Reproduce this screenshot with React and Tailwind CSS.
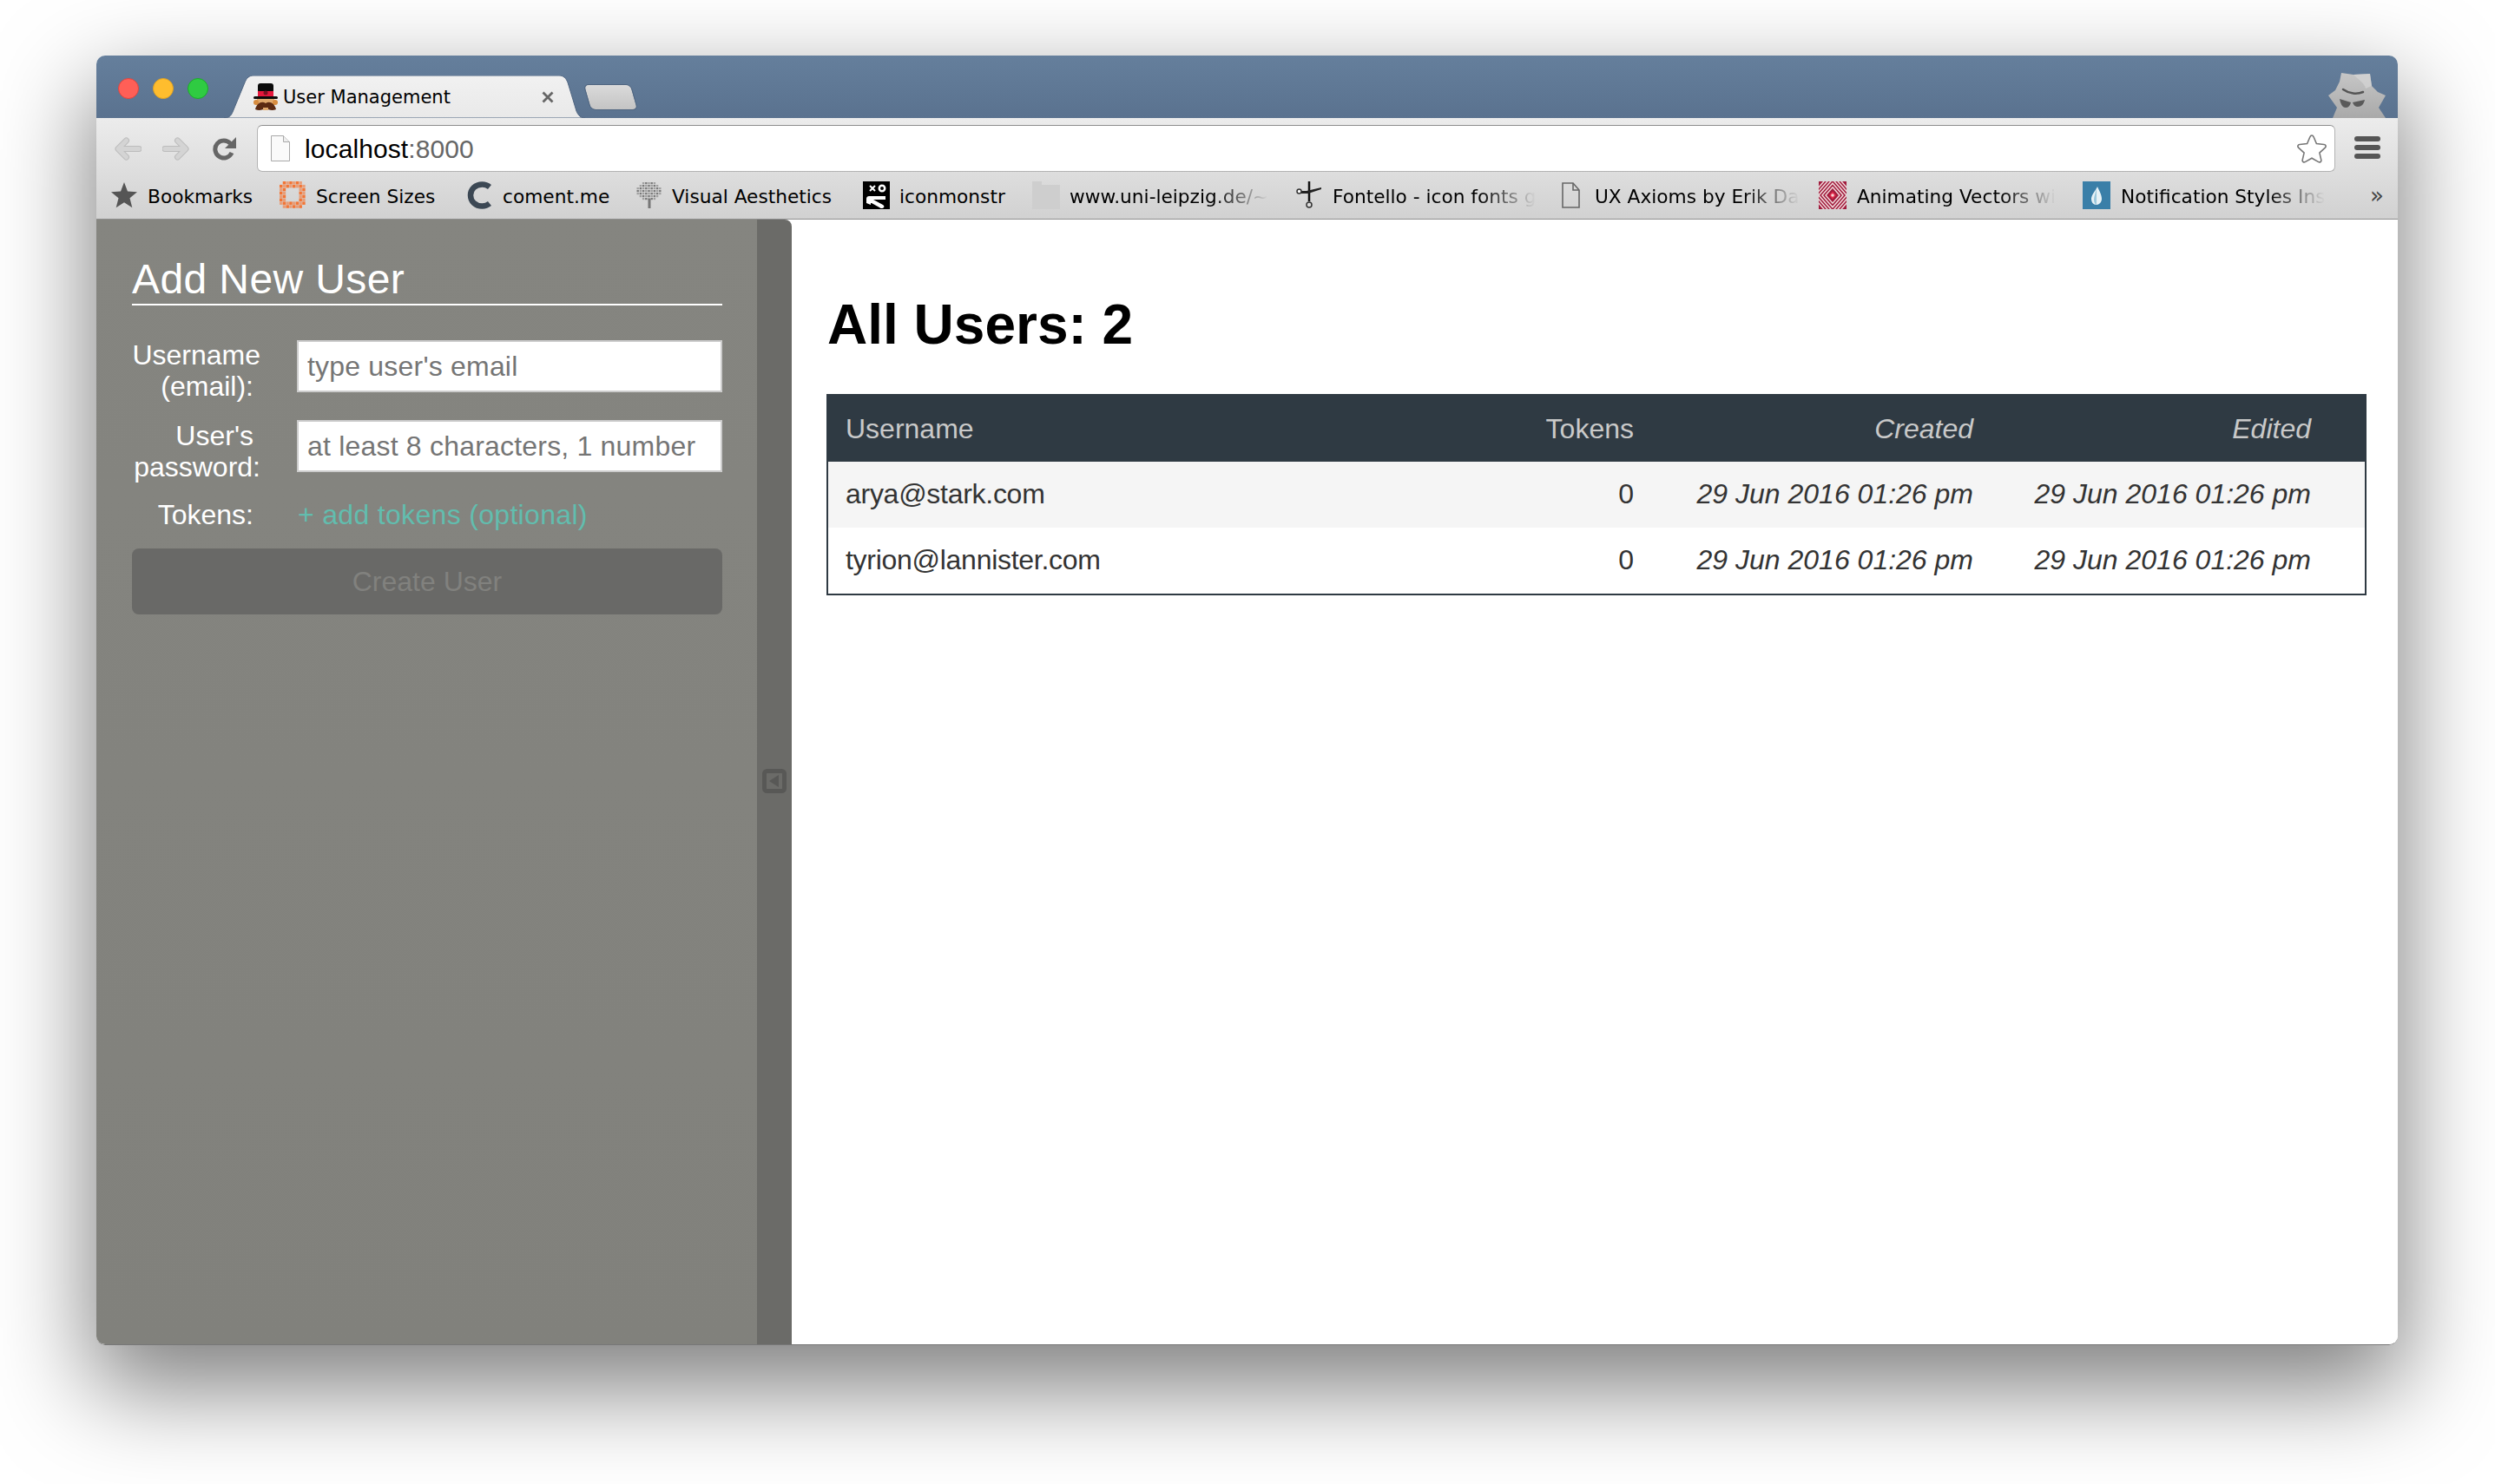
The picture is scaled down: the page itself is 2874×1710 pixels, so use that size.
import React from 'react';

const UI_FONT = "font-['DejaVu_Sans',sans-serif]";

const HatIcon = () => (
  <svg width="28" height="32" viewBox="0 0 28 32">
    <rect x="5" y="0" width="18" height="11" rx="3" fill="#0b0b0b" />
    <rect x="5" y="9" width="18" height="6" fill="#e5173c" />
    <circle cx="14" cy="11" r="2.5" fill="#7b1022" />
    <rect x="0" y="15" width="28" height="3" rx="1.5" fill="#0b0b0b" />
    <rect x="4" y="18" width="20" height="7" fill="#e0a96d" />
    <circle cx="3" cy="22" r="3" fill="#d78c3f" />
    <circle cx="25" cy="22" r="3" fill="#d78c3f" />
    <path d="M14 23C10 20 4 22 2 30c4 2 9 1 12-2 3 3 8 4 12 2-2-8-8-10-12-7z" fill="#5c2a12" />
    <path d="M11 28h6v3h-6z" fill="#e0a96d" />
  </svg>
);

const BackArrow = ({ flip }) => (
  <svg width="31" height="27" viewBox="0 0 31 27" className={flip ? '-scale-x-100' : ''}>
    <path d="M28 13.5H5M13.5 4 4 13.5 13.5 23" fill="none" stroke="#bdbdbd" strokeWidth="7" strokeLinecap="round" strokeLinejoin="round" />
    <path d="M28 13.5H5M13.5 4 4 13.5 13.5 23" fill="none" stroke="#d4d4d4" strokeWidth="5" strokeLinecap="round" strokeLinejoin="round" />
  </svg>
);

const ReloadIcon = () => (
  <svg width="28" height="28" viewBox="0 0 28 28">
    <path d="M20.5 8.5A10 10 0 1 0 22 19" fill="none" stroke="#666" strokeWidth="5" />
    <path d="M27 1v13H14z" fill="#666" />
  </svg>
);

const PageIcon = () => (
  <svg width="22" height="30" viewBox="0 0 22 30">
    <path d="M.5.5h14l7 7v22H.5z" fill="#fafafa" stroke="#a9a9a9" />
    <path d="M14.5.5v7h7" fill="#eee" stroke="#a9a9a9" />
  </svg>
);

const StarOutline = () => (
  <svg width="36" height="34" viewBox="0 0 36 34">
    <path
      d="M18 2c1 0 1.700.8 2.200 2l3.200 7.600 8.700.9c1.900.2 2.700 2.300 1.300 3.600l-6.500 6 1.900 8.300c.4 1.800-1.500 3.100-3.100 2.200L18 28.200l-7.700 4.400c-1.600.9-3.500-.4-3.100-2.200l1.900-8.300-6.500-6C1.200 14.800 2 12.700 3.900 12.500l8.700-.9L15.800 4c.5-1.200 1.200-2 2.200-2z"
      fill="#fff"
      stroke="#777"
      strokeWidth="1.600"
    />
  </svg>
);

const SpyIcon = () => (
  <svg width="66" height="55" viewBox="0 0 66 55">
    <defs>
      <linearGradient id="spy" x1="0" y1="0" x2="0" y2="1">
        <stop offset="0" stopColor="#c6c6c6" />
        <stop offset="1" stopColor="#a9a9a9" />
      </linearGradient>
    </defs>
    <path d="M15 3l14 2 19-1 2 14 7 7 9 4-8 14 8 12H5l5-12L0 29l8-6 5-10z" fill="url(#spy)" />
    <path d="M29 5l19-1 2 14-7 3c-1-6-8-10-14-16z" fill="#d6d6d6" opacity=".7" />
    <path d="M17 22c7 5 16 6 23 3" fill="none" stroke="#555" strokeWidth="2.500" strokeLinecap="round" />
    <path d="M13 33l13 4c-1 4-3 6-6 6-4 0-6-5-7-10zM28 37l14-3c-1 5-4 8-8 8-3 0-5-2-6-5z" fill="#5a5a5a" />
  </svg>
);

const StarIcon = () => (
  <svg width="30" height="30" viewBox="0 0 30 30">
    <path d="M15 0l4 10.500 11 .7-8.500 7.100 2.800 11L15 23.300 5.700 29.300l2.800-11L0 11.200l11-.7z" fill="#555" />
  </svg>
);

// ring of little squares, the favicon is very low-res
const ScreenSizesIcon = () => {
  const cells = [];
  for (let y = 0; y < 8; y++) {
    for (let x = 0; x < 8; x++) {
      const ring = x < 2 || x > 5 || y < 2 || y > 5;
      const corner = (x === 0 || x === 7) && (y === 0 || y === 7);
      if (ring && !corner) {
        cells.push(<rect key={`${x}-${y}`} x={x * 3.750} y={y * 3.900} width="3.400" height="3.500" fill="#f4702c" opacity={(x + y) % 2 ? 0.95 : 0.55} />);
      }
    }
  }
  return <svg width="30" height="32" viewBox="0 0 30 32">{cells}</svg>;
};

const ComentIcon = () => (
  <svg width="28" height="32" viewBox="0 0 28 32">
    <path d="M26 6.500C23.500 4.500 20.500 3.500 17.500 3.500 9.500 3.500 4 9 4 16s5.500 12.500 13.500 12.500c3 0 6-1 8.500-3" fill="none" stroke="#3c4854" strokeWidth="6.500" />
  </svg>
);

const TreeIcon = () => {
  const dots = [];
  for (let y = 0; y < 7; y++) {
    for (let x = 0; x < 9; x++) {
      const dist = Math.hypot(x - 4, (y - 3) * 1.2);
      if (dist < 4.6) {
        dots.push(<rect key={`${x}-${y}`} x={1.500 + x * 3.200} y={1 + y * 3} width="2.400" height="2.200" fill={(x + y) % 2 ? '#7a7a7a' : '#a0a0a0'} />);
      }
    }
  }
  return (
    <svg width="32" height="32" viewBox="0 0 32 32">
      {dots}
      <rect x="14.500" y="20" width="3" height="11" fill="#777" />
    </svg>
  );
};

const IconmonstrIcon = () => (
  <svg width="31" height="32" viewBox="0 0 31 32">
    <rect width="31" height="32" fill="#000" />
    <path d="M8 5l6 6M14 5l-6 6" stroke="#fff" strokeWidth="2" />
    <circle cx="22" cy="8" r="3.200" fill="none" stroke="#fff" strokeWidth="2.500" />
    <path d="M4 25v-5c0-2 1.500-3 3-3h19v4H12l11 6c2 1 2 4-1 4-1 0-2 0-3-1l-9-5H9v2z" fill="#fff" />
  </svg>
);

const FolderIcon = () => (
  <svg width="32" height="32" viewBox="0 0 32 32">
    <path d="M0 0h11v4h21v28H0z" fill="#cecece" />
  </svg>
);

const ScissorsIcon = () => (
  <svg width="30" height="32" viewBox="0 0 30 32">
    <path d="M15 0v23" stroke="#111" strokeWidth="2.500" />
    <path d="M4 11h8l17-4v2l-15 5H4" fill="#222" />
    <circle cx="3.500" cy="11.500" r="2.500" fill="#fff" stroke="#333" strokeWidth="1.500" />
    <circle cx="15" cy="27" r="3" fill="#ddd" stroke="#333" strokeWidth="1.500" />
  </svg>
);

const DocIcon = () => (
  <svg width="21" height="30" viewBox="0 0 21 30">
    <path d="M1 1h12l7 8v20H1z" fill="none" stroke="#666" strokeWidth="1.600" />
    <path d="M13 1v8h7" fill="none" stroke="#666" strokeWidth="1.600" />
  </svg>
);

const DiamondIcon = () => (
  <svg width="32" height="32" viewBox="0 0 32 32">
    <rect width="32" height="32" fill="#a11d3e" />
    {[24, 20, 16, 12, 8].map((r) => (
      <path key={r} d={`M16 ${16 - r * 1.150}L${16 + r} 16 16 ${16 + r * 1.150} ${16 - r} 16z`} fill="none" stroke="#f0d8da" strokeWidth="1.500" />
    ))}
    <path d="M16 11.500L20 16 16 20.500 12 16z" fill="#e22a4a" />
    <circle cx="16" cy="16" r="1.800" fill="#f6d5d5" />
  </svg>
);

const DropIcon = () => (
  <svg width="32" height="32" viewBox="0 0 32 32">
    <rect width="32" height="32" fill="#3a7fa8" />
    <path d="M17 6c2 5 5 9 5 14 0 4-3 7-6 7-4 0-6-3-6-7 0-5 5-9 7-14z" fill="#e8f2f6" />
    <path d="M16 8c-1 5-3 9-3 13 0 3 1 5 3 6z" fill="#9cc8dc" />
  </svg>
);

const BOOKMARKS = [
  { label: 'Bookmarks', icon: <StarIcon />, item: 'w-[194px]', iconBox: 'w-[30px]', gap: 'ml-[12px]' },
  { label: 'Screen Sizes', icon: <ScreenSizesIcon />, item: 'w-[216px]', iconBox: 'w-[30px]', gap: 'ml-[12px]' },
  { label: 'coment.me', icon: <ComentIcon />, item: 'w-[194px]', iconBox: 'w-[28px]', gap: 'ml-[13px]' },
  { label: 'Visual Aesthetics', icon: <TreeIcon />, item: 'w-[262px]', iconBox: 'w-[32px]', gap: 'ml-[10px]' },
  { label: 'iconmonstr', icon: <IconmonstrIcon />, item: 'w-[195px]', iconBox: 'w-[31px]', gap: 'ml-[11px]' },
  { label: 'www.uni-leipzig.de/~', icon: <FolderIcon />, item: 'w-[304px]', iconBox: 'w-[32px]', gap: 'ml-[11px]', fade: true },
  { label: 'Fontello - icon fonts g', icon: <ScissorsIcon />, item: 'w-[306px]', iconBox: 'w-[30px]', gap: 'ml-[12px]', fade: true },
  { label: 'UX Axioms by Erik Da', icon: <DocIcon />, item: 'w-[296px]', iconBox: 'w-[21px]', gap: 'ml-[17px]', fade: true },
  { label: 'Animating Vectors wi', icon: <DiamondIcon />, item: 'w-[304px]', iconBox: 'w-[32px]', gap: 'ml-[12px]', fade: true },
  { label: 'Notification Styles Ins', icon: <DropIcon />, item: 'w-[296px]', iconBox: 'w-[32px]', gap: 'ml-[12px]', fade: true },
];

const USERS = [
  { email: 'arya@stark.com', tokens: 0, created: '29 Jun 2016 01:26 pm', edited: '29 Jun 2016 01:26 pm', rowBg: 'bg-[#f5f5f5]' },
  { email: 'tyrion@lannister.com', tokens: 0, created: '29 Jun 2016 01:26 pm', edited: '29 Jun 2016 01:26 pm', rowBg: 'bg-white' },
];

const Tab = () => (
  <div className="relative ml-[18px] h-[49px] w-[416px] shrink-0">
    <svg className="absolute inset-0" width="416" height="49" viewBox="0 0 416 49">
      <defs>
        <linearGradient id="tab" x1="0" y1="0" x2="0" y2="1">
          <stop offset="0" stopColor="#f1f1f1" />
          <stop offset="1" stopColor="#e9e9e9" />
        </linearGradient>
      </defs>
      <path d="M0 49c5 0 8-2 10-7L24 8c2-5 5-8 10-8h352c5 0 8 3 10 8l10 33c2 5 5 8 10 8z" fill="url(#tab)" stroke="#4f6580" strokeWidth="1" />
    </svg>
    <div className={`relative flex h-full items-center pl-[34px] pr-[36px] ${UI_FONT} text-[21px] text-black`}>
      <HatIcon />
      <span className="ml-[6px] pt-[2px]">User Management</span>
      <svg className="ml-auto" width="14" height="14" viewBox="0 0 14 14">
        <path d="M1.500 1.500l11 11M12.500 1.500l-11 11" stroke="#666" strokeWidth="2.800" />
      </svg>
    </div>
  </div>
);

const TitleBar = () => (
  <div className="flex h-[72px] items-end bg-gradient-to-b from-[#657f9c] to-[#5a728f]">
    <div className="ml-[25px] flex gap-[16px] self-start pt-[26px]">
      <span className="h-[24px] w-[24px] rounded-full border border-[#e0443e] bg-[#ff5f57]" />
      <span className="h-[24px] w-[24px] rounded-full border border-[#dea123] bg-[#ffbd2e]" />
      <span className="h-[24px] w-[24px] rounded-full border border-[#1aab29] bg-[#2fcb42]" />
    </div>
    <Tab />
    <div className="mb-[9px] ml-[2px] h-[30px] w-[55px] shrink-0 skew-x-[16deg] rounded-[6px] border border-[#4f6580] bg-gradient-to-b from-[#dadada] to-[#c4c4c4]" />
    <div className="ml-auto mr-[14px] flex h-[55px] shrink-0 items-end">
      <SpyIcon />
    </div>
  </div>
);

const AddressRow = () => (
  <div className="flex h-[62px] items-start pl-[21px] pr-[20px] pt-[8px]">
    <div className="flex h-[54px] items-center">
      <BackArrow />
      <div className="ml-[24px]"><BackArrow flip /></div>
      <div className="ml-[27px]"><ReloadIcon /></div>
    </div>
    <div className="ml-[23px] flex h-[54px] flex-1 items-center rounded-[6px] border border-[#b3b3b3] border-t-[#8d8d8d] bg-white pl-[15px] pr-[8px]">
      <PageIcon />
      <span className="ml-[17px] font-['Liberation_Sans',sans-serif] text-[30px] tracking-[0.1px] text-black">
        localhost<span className="text-[#666]">:8000</span>
      </span>
      <div className="ml-auto"><StarOutline /></div>
    </div>
    <div className="ml-[22px] flex h-[54px] w-[30px] flex-col justify-center gap-[4px] pb-[2px]">
      <span className="h-[6px] rounded-[3px] bg-[#555]" />
      <span className="h-[6px] rounded-[3px] bg-[#555]" />
      <span className="h-[6px] rounded-[3px] bg-[#555]" />
    </div>
  </div>
);

const BookmarksRow = () => (
  <div className={`flex h-[55px] items-center border-b border-[#8f8f8f] pl-[17px] ${UI_FONT} text-[21.7px] text-black`}>
    {BOOKMARKS.map((b) => (
      <div key={b.label} className={`flex shrink-0 items-center ${b.item}`}>
        <div className={`flex shrink-0 justify-center ${b.iconBox}`}>{b.icon}</div>
        <span
          className={`${b.gap} whitespace-nowrap pt-[4px] ${
            b.fade ? '[mask-image:linear-gradient(to_right,black_72%,transparent)]' : ''
          }`}
        >
          {b.label}
        </span>
      </div>
    ))}
    <span className="ml-auto mr-[16px] text-[26px] leading-none text-[#444]">»</span>
  </div>
);

const Sidebar = () => (
  <div className="flex w-[801px] shrink-0">
    <div className="w-[761px] bg-gradient-to-b from-[#858580] to-[#81817c] pl-[41px] pr-[40px] pt-[45px] font-['Liberation_Sans',sans-serif] text-[32px] text-white">
      <h2 className="border-b-2 border-white pb-[4px] text-[48px] leading-[48px] tracking-[0.4px]">Add New User</h2>
      <div className="mt-[40px] flex h-[92px] items-start">
        <div className="-mt-[1px] w-[148px] shrink-0 text-right leading-[36px]">
          <div>Username</div>
          <div className="pr-[8px]">(email):</div>
        </div>
        <input type="text" placeholder="type user's email" className="ml-[42px] h-[60px] w-[490px] border-2 border-[#cccccc] bg-white px-[10px] tracking-[0.2px] text-[#333] outline-none placeholder:text-[#757575]" />
      </div>
      <div className="flex h-[91px] items-start">
        <div className="w-[148px] shrink-0 text-right leading-[36px]">
          <div className="pr-[8px]">User's</div>
          <div>password:</div>
        </div>
        <input type="text" placeholder="at least 8 characters, 1 number" className="ml-[42px] h-[60px] w-[490px] border-2 border-[#cccccc] bg-white px-[10px] tracking-[0.2px] text-[#333] outline-none placeholder:text-[#757575]" />
      </div>
      <div className="flex h-[57px] items-start leading-[36px]">
        <div className="w-[148px] shrink-0 pr-[8px] text-right">Tokens:</div>
        <span className="ml-[43px] tracking-[0.32px] text-[#62bdae]">+ add tokens (optional)</span>
      </div>
      <button disabled className="h-[76px] w-full rounded-[8px] bg-[#696967] text-[#81817e]">Create User</button>
    </div>
    <div className="flex w-[40px] items-center justify-center rounded-tr-[8px] bg-[#6b6b68]">
      <svg width="28" height="28" viewBox="0 0 28 28" className="mb-[3px]">
        <rect x="2.500" y="2.500" width="23" height="23" rx="3" fill="none" stroke="#585856" strokeWidth="5" />
        <path d="M19 7v14L8 14z" fill="#585856" />
      </svg>
    </div>
  </div>
);

const UsersTable = () => (
  <div className="border-2 border-[#2f3a43]">
    <table className="w-full table-fixed border-collapse text-[32px] leading-[36px]">
      <thead>
        <tr className="h-[76px] bg-[#2f3a43] text-[#c9c9c9]">
          <th className="pl-[20px] text-left font-normal">Username</th>
          <th className="w-[201px] text-right font-normal">Tokens</th>
          <th className="w-[391px] text-right font-normal italic">Created</th>
          <th className="w-[389px] text-right font-normal italic">Edited</th>
          <th className="w-[62px]" />
        </tr>
      </thead>
      <tbody>
        {USERS.map((u) => (
          <tr key={u.email} className={`h-[76px] text-[#333] ${u.rowBg}`}>
            <td className="pb-[2px] pl-[20px] tracking-[-0.28px]">{u.email}</td>
            <td className="pb-[2px] text-right">{u.tokens}</td>
            <td className="pb-[2px] text-right italic">{u.created}</td>
            <td className="pb-[2px] text-right italic">{u.edited}</td>
            <td />
          </tr>
        ))}
      </tbody>
    </table>
  </div>
);

export default function App() {
  return (
    <div className="h-[1710px] w-[2874px] overflow-hidden bg-white pl-[111px] pt-[64px]">
      <div className="flex h-[1486px] w-[2651px] flex-col overflow-hidden rounded-[10px] border-b border-[#777] shadow-[0_44px_110px_6px_rgba(0,0,0,0.5)]">
        <TitleBar />
        <div className="bg-gradient-to-b from-[#ececec] to-[#d1d1d1]">
          <AddressRow />
          <BookmarksRow />
        </div>
        <div className="flex flex-1 bg-white">
          <Sidebar />
          <div className="flex-1 pl-[40px] pr-[36px] pt-[89px] font-['Liberation_Sans',sans-serif]">
            <h1 className="ml-[1px] text-[64px] font-bold leading-[64px] text-black">All Users: 2</h1>
            <div className="mt-[48px]"><UsersTable /></div>
          </div>
        </div>
      </div>
    </div>
  );
}
